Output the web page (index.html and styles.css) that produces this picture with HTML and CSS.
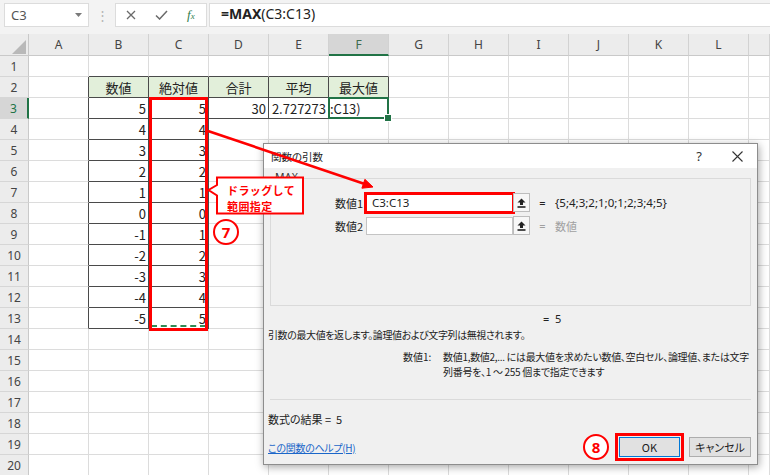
FILE: index.html
```html
<!DOCTYPE html>
<html lang="ja">
<head>
<meta charset="utf-8">
<title>MAX</title>
<link rel="stylesheet" href="styles.css">
</head>
<body>
<div class="fbar">
  <div class="namebox"><span>C3</span><svg class="caret" width="7" height="4" viewBox="0 0 7 4"><path d="M0 0H7L3.5 4Z" fill="#7a7a7a"/></svg></div>
  <div class="dots">⋮</div>
  <div class="fbtns">
    <svg width="10" height="10" viewBox="0 0 10 10"><path d="M1 1L9 9M9 1L1 9" stroke="#6a6a6a" stroke-width="1.3"/></svg>
    <svg width="13" height="10" viewBox="0 0 13 10"><path d="M1 5.5L4.6 9L12 1" stroke="#6a6a6a" stroke-width="1.5" fill="none"/></svg>
    <span class="fx">f<small>x</small></span>
  </div>
  <div class="formula"><b>=MAX</b>(C3:C13)</div>
</div>

<div class="sheet">
  <div class="corner"><svg width="28" height="22" viewBox="0 0 28 22"><path d="M12 20H26V6Z" fill="#b9b9b9"/></svg></div>
  <div class="h">A</div><div class="h">B</div><div class="h">C</div><div class="h">D</div><div class="h">E</div><div class="h hsel">F</div><div class="h">G</div><div class="h">H</div><div class="h">I</div><div class="h">J</div><div class="h">K</div><div class="h">L</div><div class="h"></div>

  <div class="rh">1</div><div></div><div class="bb"></div><div class="bb"></div><div class="bb"></div><div class="bb"></div><div class="bb"></div><div></div><div></div><div></div><div></div><div></div><div></div><div></div>

  <div class="rh">2</div><div class="rd"></div><div class="hd rd bb">数値</div><div class="hd rd bb">絶対値</div><div class="hd rd bb">合計</div><div class="hd rd bb">平均</div><div class="hd rd bb">最大値</div><div></div><div></div><div></div><div></div><div></div><div></div><div></div>

  <div class="rh rsel">3</div><div class="rd"></div><div class="n rd bb">5</div><div class="n rd bb">5</div><div class="n rd bb">30</div><div class="n rd bb">2.727273</div><div class="rd bb fsel">:C13)</div><div></div><div></div><div></div><div></div><div></div><div></div><div></div>

  <div class="rh">4</div><div class="rd"></div><div class="n rd bb">4</div><div class="n rd bb">4</div><div></div><div></div><div></div><div></div><div></div><div></div><div></div><div></div><div></div><div></div>
  <div class="rh">5</div><div class="rd"></div><div class="n rd bb">3</div><div class="n rd bb">3</div><div></div><div></div><div></div><div></div><div></div><div></div><div></div><div></div><div></div><div></div>
  <div class="rh">6</div><div class="rd"></div><div class="n rd bb">2</div><div class="n rd bb">2</div><div></div><div></div><div></div><div></div><div></div><div></div><div></div><div></div><div></div><div></div>
  <div class="rh">7</div><div class="rd"></div><div class="n rd bb">1</div><div class="n rd bb">1</div><div></div><div></div><div></div><div></div><div></div><div></div><div></div><div></div><div></div><div></div>
  <div class="rh">8</div><div class="rd"></div><div class="n rd bb">0</div><div class="n rd bb">0</div><div></div><div></div><div></div><div></div><div></div><div></div><div></div><div></div><div></div><div></div>
  <div class="rh">9</div><div class="rd"></div><div class="n rd bb">-1</div><div class="n rd bb">1</div><div></div><div></div><div></div><div></div><div></div><div></div><div></div><div></div><div></div><div></div>
  <div class="rh">10</div><div class="rd"></div><div class="n rd bb">-2</div><div class="n rd bb">2</div><div></div><div></div><div></div><div></div><div></div><div></div><div></div><div></div><div></div><div></div>
  <div class="rh">11</div><div class="rd"></div><div class="n rd bb">-3</div><div class="n rd bb">3</div><div></div><div></div><div></div><div></div><div></div><div></div><div></div><div></div><div></div><div></div>
  <div class="rh">12</div><div class="rd"></div><div class="n rd bb">-4</div><div class="n rd bb">4</div><div></div><div></div><div></div><div></div><div></div><div></div><div></div><div></div><div></div><div></div>
  <div class="rh">13</div><div class="rd"></div><div class="n rd bb">-5</div><div class="n rd bb">5</div><div></div><div></div><div></div><div></div><div></div><div></div><div></div><div></div><div></div><div></div>

  <div class="rh">14</div><div></div><div></div><div></div><div></div><div></div><div></div><div></div><div></div><div></div><div></div><div></div><div></div><div></div>
  <div class="rh">15</div><div></div><div></div><div></div><div></div><div></div><div></div><div></div><div></div><div></div><div></div><div></div><div></div><div></div>
  <div class="rh">16</div><div></div><div></div><div></div><div></div><div></div><div></div><div></div><div></div><div></div><div></div><div></div><div></div><div></div>
  <div class="rh">17</div><div></div><div></div><div></div><div></div><div></div><div></div><div></div><div></div><div></div><div></div><div></div><div></div><div></div>
  <div class="rh">18</div><div></div><div></div><div></div><div></div><div></div><div></div><div></div><div></div><div></div><div></div><div></div><div></div><div></div>
  <div class="rh">19</div><div></div><div></div><div></div><div></div><div></div><div></div><div></div><div></div><div></div><div></div><div></div><div></div><div></div>
  <div class="rh">20</div><div></div><div></div><div></div><div></div><div></div><div></div><div></div><div></div><div></div><div></div><div></div><div></div><div></div>
</div>

<div class="ants"></div>
<div class="range"></div>

<div class="dlg">
  <div class="dlg-title">
    <span>関数の引数</span>
    <span class="q">?</span>
    <svg class="close" width="11" height="11" viewBox="0 0 11 11"><path d="M0.5 0.5L10.5 10.5M10.5 0.5L0.5 10.5" stroke="#333" stroke-width="1.1"/></svg>
  </div>
  <div class="dlg-body">
    <fieldset class="group">
      <legend>MAX</legend>
      <div class="arg">
        <span class="lbl">数値1</span>
        <div class="inp hl">C3:C13</div>
        <div class="pick"><svg width="9" height="10" viewBox="0 0 9 10"><path d="M4.5 0.5L8.5 4.5H6V7H3V4.5H0.5Z" fill="#222"/><rect x="0.5" y="8.2" width="8" height="1.6" fill="#222"/></svg></div>
        <span class="eq">=</span>
        <span class="val">{5;4;3;2;1;0;1;2;3;4;5}</span>
      </div>
      <div class="arg">
        <span class="lbl">数値2</span>
        <div class="inp"></div>
        <div class="pick"><svg width="9" height="10" viewBox="0 0 9 10"><path d="M4.5 0.5L8.5 4.5H6V7H3V4.5H0.5Z" fill="#222"/><rect x="0.5" y="8.2" width="8" height="1.6" fill="#222"/></svg></div>
        <span class="eq dim">=</span>
        <span class="val dim">数値</span>
      </div>
    </fieldset>
    <div class="res">=&nbsp;&nbsp;5</div>
    <div class="desc">引数の最大値を返します。論理値および文字列は無視されます。</div>
    <div class="argdesc">
      <span class="adl">数値1:</span>
      <span class="adt">数値1,数値2,... には最大値を求めたい数値、空白セル、論理値、または文字<br>列番号を、1 ～ 255 個まで指定できます</span>
    </div>
    <div class="sep"></div>
    <div class="result">数式の結果 =&nbsp;&nbsp;5</div>
    <div class="foot">
      <a class="help">この関数のヘルプ(H)</a>
      <button class="btn ok">OK</button>
      <button class="btn">キャンセル</button>
    </div>
  </div>
</div>

<svg class="marks" width="770" height="475" viewBox="0 0 770 475">
  <line x1="208" y1="131" x2="364" y2="183.8" stroke="#f00" stroke-width="2.6"/>
  <path d="M373 187L364.9 179.3L361.9 188.2Z" fill="#f00" stroke="#f00" stroke-width="1"/>
  <path d="M217 177.5H303V213.5H217V195.5L208.5 190L217 185Z" fill="#fff" stroke="#f00" stroke-width="2"/>
</svg>
<div class="callout">ドラッグして<br>範囲指定</div>
<div class="badge b7">7</div>
<div class="badge b8">8</div>
</body>
</html>
```

FILE: styles.css
```css
* { box-sizing: border-box; }

body {
  margin: 0;
  width: 770px;
  height: 475px;
  overflow: hidden;
  position: relative;
  background: #fff;
  font-family: "Noto Sans CJK JP", "Noto Sans", sans-serif;
  color: #222;
}

/* formula bar */
.fbar {
  height: 34px;
  background: #f3f3f3;
  display: flex;
  align-items: flex-start;
  padding: 3px 0 0 4px;
}
.namebox {
  width: 85px;
  height: 24px;
  background: #fff;
  border: 1px solid #dcdcdc;
  display: flex;
  align-items: center;
  justify-content: space-between;
  padding: 0 6px 0 6px;
  font: 13px "Noto Sans", sans-serif;
  color: #555;
}
.dots {
  width: 26px;
  height: 24px;
  line-height: 24px;
  text-align: center;
  color: #b5b5b5;
  font-size: 13px;
}
.fbtns {
  width: 92px;
  height: 24px;
  background: #fff;
  border: 1px solid #dcdcdc;
  display: flex;
  align-items: center;
  gap: 19px;
  padding-left: 10px;
}
.fx {
  font: italic 13px "Liberation Serif", serif;
  color: #2f7d4e;
}
.fx small { font-size: 9px; }
.formula {
  flex: 1;
  height: 24px;
  margin-left: 2px;
  background: #fff;
  border: 1px solid #dcdcdc;
  border-right: none;
  padding-left: 11px;
  line-height: 22px;
  font: 14px "Noto Sans", sans-serif;
  color: #222;
}
.formula b { font-weight: 700; }

/* sheet */
.sheet {
  display: grid;
  grid-template-columns: 29px repeat(12, 60px) 1fr;
  grid-template-rows: 22px repeat(20, 21px);
}
.sheet > div {
  border-right: 1px solid #dcdcdc;
  border-bottom: 1px solid #dcdcdc;
  display: flex;
  align-items: center;
  padding: 0 2px;
  font-size: 13px;
  color: #222;
  white-space: nowrap;
}
.sheet > .corner {
  background: #ececec;
  border-right: 1px solid #c9c9c9;
  border-bottom: 1px solid #c9c9c9;
  padding: 0;
}
.sheet > .h {
  background: #ececec;
  border-right: 1px solid #d2d2d2;
  border-bottom: 1px solid #c9c9c9;
  justify-content: center;
  font: 12px "Noto Sans", sans-serif;
  color: #444;
}
.sheet > .hsel {
  background: #d6d6d6;
  border-bottom: 2px solid #217346;
  color: #3d6b4e;
}
.sheet > .rh {
  background: #ececec;
  border-right: 1px solid #c9c9c9;
  border-bottom: 1px solid #d6d6d6;
  justify-content: center;
  font: 12px "Noto Sans", sans-serif;
  color: #444;
}
.sheet > .rsel {
  background: #d6d6d6;
  border-right: 2px solid #217346;
  color: #217346;
}
.sheet > .n { justify-content: flex-end; }
.sheet > .hd {
  background: #e2efda;
  justify-content: center;
}
.sheet > .rd { border-right-color: #4a4a4a; }
.sheet > .bb { border-bottom-color: #4a4a4a; }
.sheet > .fsel { position: relative; padding-left: 1px; }
.sheet > .fsel::after {
  content: "";
  position: absolute;
  left: -1px;
  top: -1px;
  right: -1px;
  bottom: -1px;
  border: 2px solid #217346;
}
.sheet > .fsel::before {
  content: "";
  position: absolute;
  right: -4px;
  bottom: -4px;
  width: 6px;
  height: 6px;
  background: #217346;
  border: 1px solid #fff;
  z-index: 1;
}

/* copy marquee + drag range annotation */
.ants {
  position: absolute;
  left: 151px;
  top: 325px;
  width: 55px;
  border-top: 2px dashed #2f8a55;
}
.range {
  position: absolute;
  left: 149px;
  top: 97px;
  width: 59px;
  height: 234px;
  border: 3px solid #f00;
}

/* dialog */
.dlg {
  position: absolute;
  left: 263px;
  top: 143px;
  width: 495px;
  height: 322px;
  background: #f0f0f0;
  border: 1px solid #8d8d8d;
  box-shadow: 1px 2px 8px rgba(0, 0, 0, 0.35);
  display: flex;
  flex-direction: column;
  font-size: 11px;
  color: #222;
  font-feature-settings: "palt";
}
.dlg-title {
  height: 24px;
  background: #fff;
  display: flex;
  align-items: center;
  padding-left: 7px;
  font-size: 10.5px;
  color: #222;
}
.dlg-title .q {
  margin-left: auto;
  font: 13px "Noto Sans", sans-serif;
  color: #333;
}
.dlg-title .close { margin: 0 14px 0 30px; }
.dlg-body {
  flex: 1;
  padding: 10px 6px 0 4px;
  display: flex;
  flex-direction: column;
}
.group {
  margin: 0 0 0 2px;
  height: 128px;
  border: 1px solid #dadada;
  padding: 14px 0 0 0;
  position: relative;
}
.group legend {
  position: absolute;
  left: 4px;
  top: -9px;
  padding: 0;
  font: 10.5px "Noto Sans", sans-serif;
  color: #333;
  letter-spacing: 0.3px;
}
.arg {
  display: flex;
  align-items: center;
  height: 19px;
  margin-bottom: 4px;
}
.arg .lbl {
  width: 95px;
  text-align: right;
  padding-right: 3px;
  font-size: 11px;
}
.inp {
  width: 147px;
  height: 18px;
  background: #fff;
  border: 1px solid #c4c4c4;
  padding-left: 5px;
  font: 11.5px "Noto Sans", sans-serif;
  line-height: 16px;
}
.inp.hl {
  border-color: #f00;
  outline: 2px solid #f00;
  outline-offset: 0;
}
.pick {
  width: 17px;
  height: 19px;
  background: #f7f7f7;
  border: 1px solid #bdbdbd;
  display: flex;
  align-items: center;
  justify-content: center;
}
.eq {
  width: 25px;
  text-align: center;
  font: 11px "Noto Sans", sans-serif;
}
.val { font: 11.5px "Noto Sans", sans-serif; }
.dim { color: #a0a0a0; }
.val.dim { font: 11px "Noto Sans CJK JP", sans-serif; }

.res {
  height: 16px;
  line-height: 16px;
  margin-top: 5px;
  padding-left: 275px;
  font: 11px "Noto Sans", sans-serif;
}
.desc {
  height: 16px;
  line-height: 16px;
  font-size: 10px;
  letter-spacing: -0.4px;
  white-space: nowrap;
}
.argdesc {
  display: flex;
  margin-top: 6px;
  padding-left: 135px;
  line-height: 15px;
  font-size: 10px;
  white-space: nowrap;
}
.adl { width: 40px; flex: none; }
.adt { letter-spacing: -0.3px; }
.sep {
  margin: 20px 0 0 2px;
  height: 1px;
  background: #dadada;
}
.result {
  height: 16px;
  line-height: 16px;
  margin-top: 11px;
  font-size: 11px;
}
.foot {
  display: flex;
  align-items: center;
  margin-top: 10px;
  height: 20px;
}
.help {
  color: #1a66c9;
  text-decoration: underline;
  font-size: 10px;
  letter-spacing: -0.3px;
}
.btn {
  width: 62px;
  height: 20px;
  background: #e1e1e1;
  border: 1px solid #adadad;
  font: 11px "Noto Sans CJK JP", sans-serif;
  font-feature-settings: "palt";
  color: #222;
  padding: 0;
  margin-left: 9px;
}
.btn.ok {
  margin-left: auto;
  width: 61px;
  border-color: #0078d7;
  outline: 3px solid #f00;
  outline-offset: 1px;
}

/* annotations */
.marks {
  position: absolute;
  left: 0;
  top: 0;
  pointer-events: none;
}
.callout {
  position: absolute;
  left: 217px;
  top: 182px;
  width: 86px;
  padding-left: 10px;
  color: #f00;
  font-weight: 700;
  font-size: 11px;
  line-height: 16px;
  letter-spacing: 0.4px;
  white-space: nowrap;
}
.badge {
  position: absolute;
  width: 26px;
  height: 26px;
  border: 2px solid #f00;
  border-radius: 50%;
  background: #fff;
  color: #f00;
  display: flex;
  align-items: center;
  justify-content: center;
  font: 700 15px "Noto Sans", sans-serif;
}
.b7 { left: 213px; top: 219px; }
.b8 { left: 583px; top: 434px; }
```
